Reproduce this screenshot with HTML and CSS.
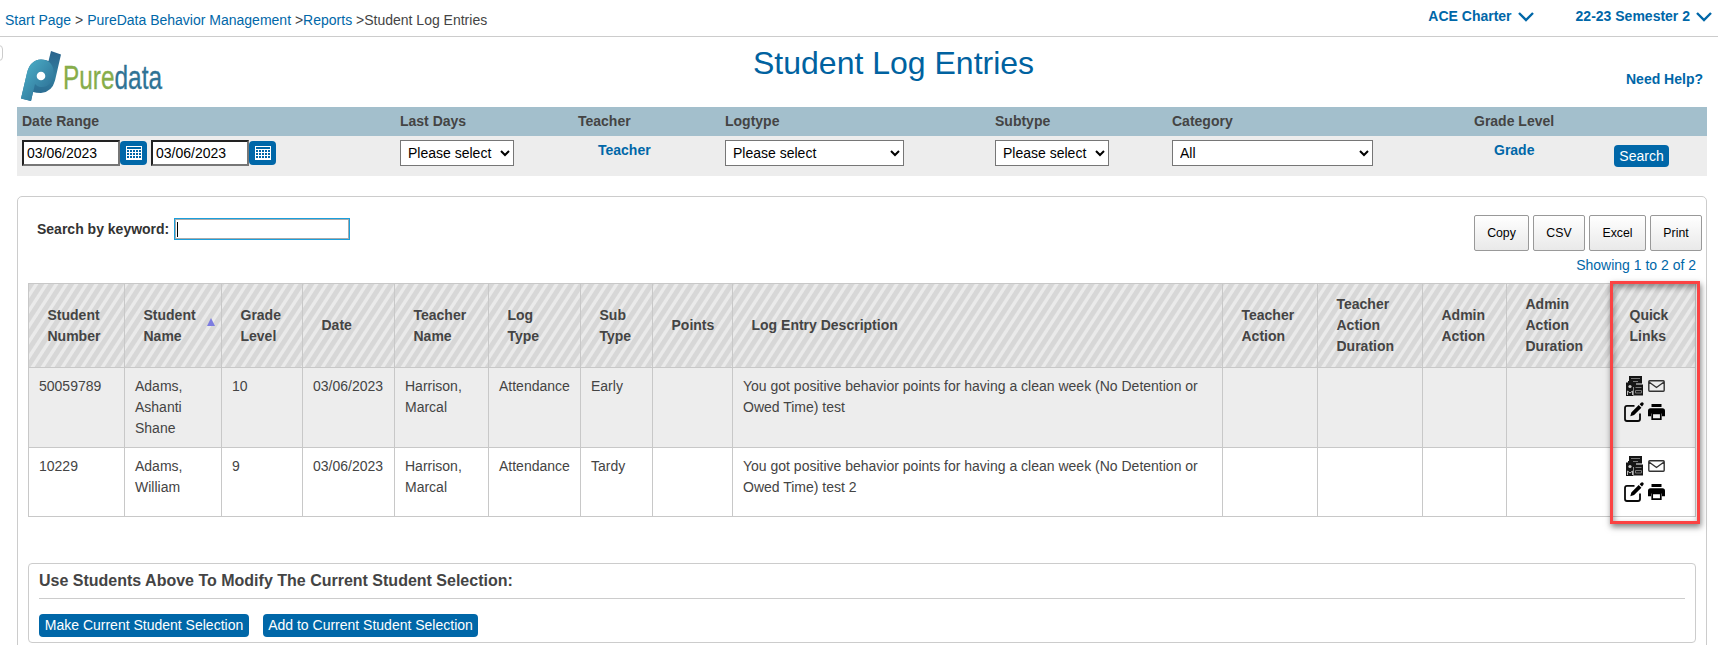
FILE: index.html
```html
<!DOCTYPE html>
<html lang="en">
<head>
<meta charset="utf-8">
<title>Student Log Entries</title>
<link rel="stylesheet" href="styles.css">
</head>
<body>
<svg width="0" height="0" class="defs">
  <symbol id="report" viewBox="0 0 17 20"><path fill="#151515" d="M3 0h13v7.500H3zM0 6.500h7.500V20H0zM8 8.500h9V19.500H8z"/><path fill="#151515" d="M2 5h8v6H2z"/><path stroke="#777" d="M5 2.500h9M7 5.500h5M9.500 11.500h6M9.500 14.500h6v2.500h-6z" fill="none"/><circle cx="4" cy="10.500" r="1.600" fill="#ccc"/><path d="M1.500 19v-4l2.500 2 2.500-2v4" fill="none" stroke="#bbb"/></symbol>
  <symbol id="mail" viewBox="0 0 17 12"><path fill="none" stroke="#333" stroke-width="1.400" d="M1.700.8h13.600q.9 0 .9.900v8.600q0 .9-.9.900H1.700q-.9 0-.9-.9V1.700q0-.9.900-.9zM1 2l7.500 5.500L16 2"/></symbol>
  <symbol id="edit" viewBox="0 0 20 20"><path fill="none" stroke="#0a0a0a" stroke-width="1.800" d="M10.500 3.900H3q-2 0-2 2V17q0 2 2 2h11q2 0 2-2v-5.500"/><path d="M6.300 14.200l1-3.800 7.400-7.300 2.700 2.700-7.300 7.300zM15.600 2.200L17 .8q1.200-1 2.200 0t0 2.200l-1.200 1.600z"/></symbol>
  <symbol id="print" viewBox="0 0 17 17"><path d="M3.500 0h10v3h-10zM2.500 4.300h12q2.500 0 2.500 2.500v5.500h-3V9.500H3v2.800H0V6.800q0-2.500 2.500-2.500z"/><path fill="none" stroke="#000" stroke-width="1.700" d="M4.200 9.500h8.600v5.600H4.200z"/></symbol>
  <symbol id="cal" viewBox="0 0 16 14"><path fill="#fff" d="M0 0h16v14H0z"/><path fill="#0067a8" d="M1 1h14v2H1z"/><path stroke="#0067a8" stroke-width="2" stroke-dasharray="2 1" d="M1 5h14M1 8h14M1 11h14"/></symbol>
  <symbol id="chev" viewBox="0 0 16 10"><path fill="none" stroke="#0067a8" stroke-width="2.400" d="M1 1l7 7 7-7"/></symbol>
</svg>
<header class="topbar">
  <nav class="crumbs"><a>Start Page</a> &gt; <a>PureData Behavior Management</a> &gt;<a>Reports</a> &gt;Student Log Entries</nav>
  <div class="context">
    <a>ACE Charter <svg class="chev"><use href="#chev"/></svg></a>
    <a>22-23 Semester 2 <svg class="chev"><use href="#chev"/></svg></a>
  </div>
</header>
<div class="handle"></div>
<main>
  <div class="titlebar">
    <svg class="logo" viewBox="0 0 145 52">
      <defs>
        <linearGradient id="g1" x1="0" y1="0" x2="1" y2="1"><stop offset="0" stop-color="#4fb6cd"/><stop offset="1" stop-color="#28658d"/></linearGradient>
        <linearGradient id="g2" x1="0" y1="1" x2="0" y2="0"><stop offset="0" stop-color="#28658d"/><stop offset=".5" stop-color="#327f9f"/><stop offset="1" stop-color="#2a638c"/></linearGradient>
      </defs>
      <path fill="url(#g2)" d="M30 0l10 3.500-6 26Q31 41 20 42q-5 0-8-1L10 50 0 47.500 6 22Q9 9 20 8.500q5 0 7.500 1.500z"/>
      <path fill="url(#g1)" d="M0 47.500L6 22Q9 9 20 8.500c8 0 13.500 6 12.500 14.500S27 37 19 36q-3-.5-5-3l-4 17z"/>
      <circle cx="20" cy="25" r="4.300" fill="#fff"/>
      <text x="42" y="38" font-size="33" textLength="99" lengthAdjust="spacingAndGlyphs"><tspan class="pure">Pure</tspan><tspan class="data">data</tspan></text>
    </svg>
    <h1>Student Log Entries</h1>
    <a class="help">Need Help?</a>
  </div>
  <section class="filters">
    <div class="frow fhead"><span>Date Range</span><span>Last Days</span><span>Teacher</span><span>Logtype</span><span>Subtype</span><span>Category</span><span>Grade Level</span><span></span></div>
    <div class="frow fbody">
      <div class="dates"><input class="date" value="03/06/2023"><button class="calbtn"><svg><use href="#cal"/></svg></button><input class="date second" value="03/06/2023"><button class="calbtn"><svg><use href="#cal"/></svg></button></div>
      <div><select class="w114"><option>Please select</option></select></div>
      <div><a class="pick">Teacher</a></div>
      <div><select class="w179"><option>Please select</option></select></div>
      <div><select class="w114"><option>Please select</option></select></div>
      <div><select class="w201"><option>All</option></select></div>
      <div><a class="pick">Grade</a></div>
      <div><button class="btn search">Search</button></div>
    </div>
  </section>
  <section class="panel">
    <div class="tools">
      <label class="keyword">Search by keyword: <span class="kwfield"><i></i></span></label>
      <div class="exports"><button class="e55">Copy</button><button class="e52">CSV</button><button class="e57">Excel</button><button class="e52">Print</button></div>
    </div>
    <div class="showing">Showing 1 to 2 of 2</div>
    <div class="tablewrap">
      <table>
        <colgroup><col class="c96"><col class="c97"><col class="c81"><col class="c92"><col class="c94"><col class="c92"><col class="c72"><col class="c80"><col class="c490"><col class="c95"><col class="c105"><col class="c84"><col class="c105"><col class="c84"></colgroup>
        <thead><tr><th>Student<br>Number</th><th class="sorted">Student<br>Name</th><th>Grade<br>Level</th><th>Date</th><th>Teacher<br>Name</th><th>Log<br>Type</th><th>Sub<br>Type</th><th>Points</th><th>Log Entry Description</th><th>Teacher<br>Action</th><th>Teacher<br>Action<br>Duration</th><th>Admin<br>Action</th><th>Admin<br>Action<br>Duration</th><th class="quick">Quick<br>Links</th></tr></thead>
        <tbody>
          <tr class="odd"><td>50059789</td><td>Adams,<br>Ashanti<br>Shane</td><td>10</td><td>03/06/2023</td><td>Harrison,<br>Marcal</td><td>Attendance</td><td>Early</td><td></td><td>You got positive behavior points for having a clean week (No Detention or<br>Owed Time) test</td><td></td><td></td><td></td><td></td><td><div class="links"><svg class="i-report"><use href="#report"/></svg><svg class="i-mail"><use href="#mail"/></svg><svg class="i-edit"><use href="#edit"/></svg><svg class="i-print"><use href="#print"/></svg></div></td></tr>
          <tr class="even"><td>10229</td><td>Adams,<br>William</td><td>9</td><td>03/06/2023</td><td>Harrison,<br>Marcal</td><td>Attendance</td><td>Tardy</td><td></td><td>You got positive behavior points for having a clean week (No Detention or<br>Owed Time) test 2</td><td></td><td></td><td></td><td></td><td><div class="links"><svg class="i-report"><use href="#report"/></svg><svg class="i-mail"><use href="#mail"/></svg><svg class="i-edit"><use href="#edit"/></svg><svg class="i-print"><use href="#print"/></svg></div></td></tr>
        </tbody>
      </table>
      <div class="highlight"></div>
    </div>
    <div class="selection">
      <h2>Use Students Above To Modify The Current Student Selection:</h2>
      <div class="actions"><button class="btn make">Make Current Student Selection</button><button class="btn add">Add to Current Student Selection</button></div>
    </div>
  </section>
</main>
</body>
</html>
```
FILE: styles.css
```css
* { box-sizing: border-box; }
html, body { height: 645px; overflow: hidden; }
body { margin: 0; background: #fff; color: #444; font: 14px/21px "Liberation Sans", Arial, sans-serif; position: relative; }
button, input, select { font: inherit; margin: 0; }
a { color: #0067a8; }
.defs { position: absolute; }
.topbar { height: 37px; border-bottom: 1px solid #ccc; display: flex; justify-content: space-between; align-items: flex-start; padding: 0 6px 0 5px; }
.crumbs { padding-top: 10px; }
.context { display: flex; gap: 42px; padding-top: 6px; font-weight: bold; }
.context a { display: flex; align-items: center; gap: 6px; }
.chev { width: 16px; height: 10px; }
.handle { position: absolute; left: -6px; top: 45px; width: 9px; height: 16px; border: 1px solid #ccc; border-radius: 4px; }
main { padding: 0 11px 0 17px; }
.titlebar { height: 70px; display: grid; grid-template-columns: 736px auto 1fr; }
.logo { width: 145px; height: 52px; margin: 14px 0 0 4px; overflow: visible; }
.pure { fill: #87ad4a; stroke: #87ad4a; stroke-width: .3px; }
.data { fill: #2f7395; stroke: #2f7395; stroke-width: .3px; }
h1 { margin: 8px 0 0; font-size: 32px; line-height: 36px; font-weight: normal; color: #0062a0; }
.help { justify-self: end; margin: 32px 4px 0 0; font-weight: bold; }
.filters { margin-bottom: 20px; }
.frow { display: grid; grid-template-columns: 378px 178px 147px 270px 177px 302px 140px 98px; }
.fhead { height: 29px; background: #a3bfcc; font-weight: bold; padding-top: 4px; }
.fhead span { padding-left: 5px; }
.fbody { height: 40px; background: #ededed; padding-top: 4px; }
.fbody > div { padding-left: 5px; height: 26px; display: flex; align-items: flex-start; }
.date { width: 98px; height: 26px; border: 2px solid; border-color: #222 #767676 #767676 #222; padding: 1px 3px; color: #000; }
.second { margin-left: 4px; }
.calbtn { width: 27px; height: 24px; margin-top: 1px; padding: 0; border: 0; border-radius: 4px; background: #0067a8; display: grid; place-items: center; }
.calbtn svg { width: 16px; height: 14px; }
select { height: 26px; border: 1px solid #767676; border-radius: 0; background: #fff; color: #000; padding: 0 3px; }
.w114 { width: 114px; }
.w179 { width: 179px; }
.w201 { width: 201px; }
.pick { font-weight: bold; padding-left: 20px; }
.btn { border: 0; border-radius: 4px; background: #0067a8; color: #fff; height: 23px; padding: 0; white-space: nowrap; }
.search { width: 55px; height: 22px; margin-top: 5px; line-height: 20px; }
.panel { height: 480px; border: 1px solid #ccc; border-radius: 5px 5px 0 0; padding: 0 10px; }
.tools { display: flex; justify-content: space-between; height: 58px; padding-top: 18px; margin-right: -6px; }
.keyword { display: flex; font-weight: bold; color: #333; padding: 3px 0 0 9px; height: 25px; gap: 5px; line-height: 22px; }
.kwfield { width: 176px; height: 22px; border: 1px solid #1a9fdc; box-shadow: inset 0 0 0 1px #aaa; padding: 3px 2px; }
.kwfield i { display: block; width: 1px; height: 15px; background: #000; }
.exports { display: flex; gap: 4px; }
.exports button { height: 36px; border: 1px solid #999; border-radius: 2px; background: linear-gradient(#fff, #e9e9e9); color: #000; font-size: 12.320px; padding: 0; }
.e55 { width: 55px; }
.e52 { width: 52px; }
.e57 { width: 57px; }
.showing { text-align: right; color: #0067a8; height: 28px; }
.tablewrap { position: relative; }
table { width: 1668px; table-layout: fixed; border-collapse: collapse; }
.c96 { width: 96px; } .c97 { width: 97px; } .c81 { width: 81px; } .c92 { width: 92px; }
.c94 { width: 94px; } .c72 { width: 72px; } .c80 { width: 80px; } .c490 { width: 490px; }
.c95 { width: 95px; } .c105 { width: 105px; } .c84 { width: 84px; }
th, td { border: 1px solid #c8c8c8; }
thead { background: repeating-linear-gradient(123deg, #d7d7d7 0 4px, #eaeaea 5px 7.500px, #d7d7d7 8.390px); }
th { height: 84px; padding: 0 0 0 18.500px; text-align: left; vertical-align: middle; position: relative; white-space: nowrap; }
.quick { padding-left: 17.500px; }
.sorted::after { content: ""; position: absolute; left: 82px; top: 34px; border: 4.500px solid transparent; border-top: 0; border-bottom: 8px solid #7c7ce0; }
td { padding: 8px 0 0 10px; vertical-align: top; white-space: nowrap; }
.odd { height: 80px; background: #ededed; }
.even { height: 69px; }
.links { display: grid; grid-template-columns: 22px 23px; grid-template-rows: 20px 32px; height: 52px; margin: 0 0 -10px 1px; place-items: center; }
.links svg { display: block; }
.i-report { width: 17px; height: 20px; }
.i-mail { width: 17px; height: 12px; }
.i-edit { width: 20px; height: 20px; }
.i-print { width: 17px; height: 17px; }
.highlight { position: absolute; left: 1582px; top: -2px; width: 90px; height: 243px; border: 3px solid #fb4343; box-shadow: 1px 3px 6px rgba(0,0,0,.5), inset 1px 3px 6px rgba(0,0,0,.4); }
.selection { margin-top: 46px; height: 80px; border: 1px solid #ccc; border-radius: 4px; padding: 0 10px; }
h2 { margin: 0; height: 35px; border-bottom: 1px solid #ccc; font-size: 16px; line-height: 34px; }
.actions { display: flex; gap: 14px; padding-top: 15px; }
.make { width: 210px; }
.add { width: 215px; }
```
